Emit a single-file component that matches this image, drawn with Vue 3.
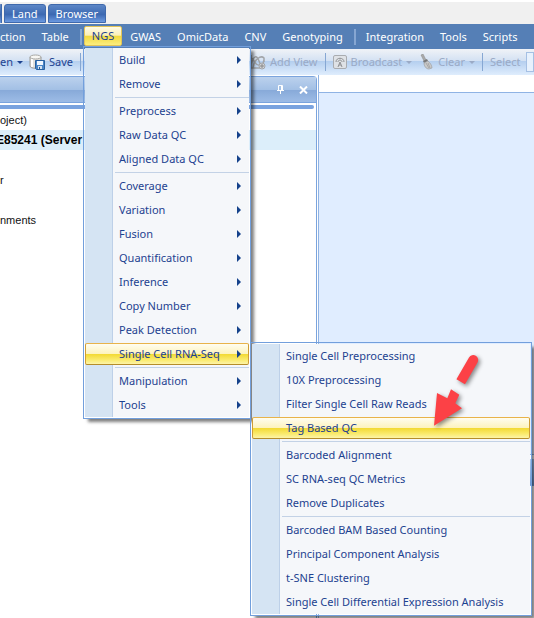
<script setup>
const menuBar = ['ction', 'Table', '|', 'NGS', 'GWAS', 'OmicData', 'CNV', 'Genotyping', '|', 'Integration', 'Tools', 'Scripts']

const ngsMenu = [
  ['Build', 'Remove'],
  ['Preprocess', 'Raw Data QC', 'Aligned Data QC'],
  ['Coverage', 'Variation', 'Fusion', 'Quantification', 'Inference', 'Copy Number', 'Peak Detection', 'Single Cell RNA-Seq'],
  ['Manipulation', 'Tools'],
]

const cellMenu = [
  ['Single Cell Preprocessing', '10X Preprocessing', 'Filter Single Cell Raw Reads', 'Tag Based QC'],
  ['Barcoded Alignment', 'SC RNA-seq QC Metrics', 'Remove Duplicates'],
  ['Barcoded BAM Based Counting', 'Principal Component Analysis', 't-SNE Clustering', 'Single Cell Differential Expression Analysis'],
]

const tree = ['oject)', 'E85241 (Server', '', 'r', '', 'nments']
</script>

<template>
  <div class="window">
    <nav class="tabs">
      <button class="tab first" aria-label="Previous tab"></button>
      <button class="tab">Land</button>
      <button class="tab">Browser</button>
    </nav>

    <nav class="menubar">
      <template v-for="(m, i) in menuBar" :key="i">
        <span v-if="m === '|'" class="bar-sep"></span>
        <button v-else class="bar-item" :class="{ open: m === 'NGS', cut: i === 0 }">{{ m }}</button>
      </template>
    </nav>

    <div class="toolbar">
      <div class="tools left-tools">
        <button class="tool">en<i class="down"></i></button>
        <button class="tool save">
          <svg width="16" height="16" viewBox="0 0 16 16">
            <path d="M1 3v9c0 3 11 3 11 0V3z" fill="#e3e1dc" stroke="#9b9a97" />
            <path d="M3 4v9" stroke="#fff" stroke-width="2" />
            <ellipse cx="6.500" cy="3" rx="5.500" ry="2" fill="#f8f7f3" stroke="#a9a8a4" />
            <path d="M6.500 6.500h9v9h-8l-1-1z" fill="#4a86c8" stroke="#28609f" />
            <path d="M8 7h6v4H8z" fill="#eef6ff" />
            <path d="M9 12h4v3H9z" fill="#d4e2ef" />
            <path d="M10 13h1v2h-1z" fill="#28609f" />
          </svg>
          Save
        </button>
        <span class="tool-sep"></span>
      </div>
      <div class="tools right-tools">
        <button class="tool" disabled>
          <svg width="16" height="16" viewBox="0 0 16 16" fill="none" stroke="#a2a5a9" stroke-width="1.500">
            <path d="M1 1v13h9M1 10c3-9 6-9 8-3s4 4 5-1M1 4c3 0 4 8 8 7M3 14c1-9 8-13 11-10v4" />
            <circle cx="12" cy="12" r="3" fill="#d3d5d8" stroke-width="1" />
            <path d="M12 10v4M10 12h4" stroke="#888" stroke-width="1" />
          </svg>
          Add View
        </button>
        <span class="tool-sep"></span>
        <button class="tool" disabled>
          <svg width="14" height="14" viewBox="0 0 14 14" fill="none" stroke="#8d8f92">
            <rect x=".5" y=".5" width="13" height="13" rx="1.500" fill="#dfe2e6" stroke="#a9acb0" />
            <path d="M3 7c0-5 8-5 8 0M5 7c0-2.500 4-2.500 4 0M7 7l-2 5M7 7l2 5M6 10h2" />
          </svg>
          Broadcast<i class="down"></i>
        </button>
        <button class="tool" disabled>
          <svg width="14" height="16" viewBox="0 0 14 16">
            <path d="M1 1l2-1 3 6-2 1z" fill="#aaa" stroke="#858585" stroke-width=".5" />
            <path d="M3 7l4-2 1 2-4 2z" fill="#777" />
            <path d="M4 9l4-2c2 2 4 4 4 7l-3 1c-3 0-5-3-5-6z" fill="#c9c9c9" stroke="#999" stroke-width=".6" />
            <path d="M6 9l3 5M8 9l2 5" stroke="#909090" stroke-width=".6" />
          </svg>
          Clear<i class="down"></i>
        </button>
        <span class="tool-sep"></span>
        <label class="tool disabled" for="selection">Select</label>
        <input id="selection" class="box" disabled />
      </div>
    </div>

    <main class="work">
      <section class="explorer">
        <header class="pane-head">
          <button class="pane-btn" aria-label="Pin">
            <svg width="9" height="9" viewBox="0 0 9 9" fill="none" stroke="#fff">
              <path d="M2.500 5V.5h4V5M5.500 1v4M1 5.500h7M4.500 6v3" />
            </svg>
          </button>
          <button class="pane-btn" aria-label="Close">
            <svg width="9" height="8" viewBox="0 0 9 8" fill="none" stroke="#fff" stroke-width="2">
              <path d="M1 .5l7 7M8 .5l-7 7" />
            </svg>
          </button>
        </header>
        <div class="band"></div>
        <ul class="tree">
          <li v-for="(t, i) in tree" :key="i" :class="{ chosen: i === 1 }">{{ t }}</li>
        </ul>
      </section>
      <section class="canvas">
        <div class="view"></div>
        <div class="dock"></div>
        <div class="dock-body"></div>
      </section>
    </main>

    <div class="menu ngs">
      <div v-for="(group, g) in ngsMenu" :key="g" class="group">
        <button v-for="item in group" :key="item" class="item" :class="{ hot: item === 'Single Cell RNA-Seq' }">
          <span>{{ item }}</span><i class="more"></i>
        </button>
      </div>
    </div>

    <div class="menu cells">
      <div v-for="(group, g) in cellMenu" :key="g" class="group">
        <button v-for="item in group" :key="item" class="item" :class="{ hot: item === 'Tag Based QC' }">
          <span>{{ item }}</span>
        </button>
      </div>
    </div>

    <svg class="pointer" width="60" height="84" viewBox="0 0 60 84">
      <g fill="#fc4146">
        <path d="M26.400 29.200L39 7.500a4.700 4.700 0 0 1 8.500 5L35 34.200z" />
        <path d="M4 75.700L7 43l10.300 5.300L21 39.300l8.300 5.400-4 8.600 6.700 5z" />
      </g>
    </svg>
  </div>
</template>

<style>
html, body, #app { height: 100%; }
body { margin: 0; overflow: hidden; }
</style>

<style scoped>
.window {
  position: relative;
  display: flex;
  flex-direction: column;
  height: 100%;
  overflow: hidden;
  background: #fff;
  font: 11px/16px "Noto Sans", "Open Sans", sans-serif;
  color: #1d4290;
}
button {
  margin: 0;
  padding: 0;
  border: 0;
  background: none;
  font: inherit;
  color: inherit;
  white-space: nowrap;
}
.tabs {
  display: flex;
  gap: 2px;
  height: 20px;
  margin-top: 2px;
  padding-top: 2px;
  background: #f0f0f0;
}
.tab {
  height: 19px;
  padding: 0 7px;
  border: 1px solid #3f69ac;
  border-radius: 3px 3px 0 0;
  background: linear-gradient(#5c86c6, #3f6cb4 50%, #3865af 52%, #6c9ae0);
  color: #fff;
  line-height: 17px;
}
.tab.first { width: 2px; padding: 0; border-width: 1px 1px 0 0; }
.menubar {
  display: flex;
  align-items: center;
  height: 25px;
  background: #557fb6;
  color: #fff;
}
.bar-item { height: 21px; padding: 0 8px; line-height: 18px; }
.bar-item.cut { padding-left: 0; }
.bar-item.open {
  align-self: flex-start;
  margin-top: 2px;
  height: 20px;
  padding: 0 7px;
  border: 1px solid #e2c458;
  border-radius: 2px;
  background: linear-gradient(#fffbe6, #fbefb8 46%, #f2d93c 50%, #fcee80);
  color: #1d4290;
}
.bar-sep { width: 2px; height: 16px; margin: 0 2px 0 3px; background: #86a6d2; }
.toolbar {
  display: flex;
  align-items: center;
  height: 26px;
  background: linear-gradient(#f0f3f7, #d3e1f3 46%, #b5cfef 48%, #dfedfd);
}
.tools { display: flex; align-items: center; }
.left-tools { width: 76px; }
.right-tools { flex: 1; margin-left: 174px; }
.tool { display: flex; align-items: center; gap: 4px; padding: 0; }
.tool.save { margin-left: 6px; }
.tool:disabled, .tool.disabled { color: #9aaac6; }
.tool-sep { flex: none; width: 1px; height: 18px; margin: 0 7px; background: #86a7d3; }
.down { border: 3px solid transparent; border-top-color: currentColor; border-bottom: 0; }
.right-tools .tool + .tool { margin-left: 8px; }
.box {
  flex: 1;
  min-width: 8px;
  width: 8px;
  box-sizing: border-box;
  height: 20px;
  margin-left: 5px;
  border: 1px solid #a5c0e4;
  background: #e7f1fd;
}
.work { flex: 1; display: flex; min-height: 0; }
.explorer {
  flex: 0 0 317px;
  box-sizing: border-box;
  margin-top: 1px;
  border-right: 1px solid #7ba4dd;
  border-top-right-radius: 4px;
  overflow: hidden;
}
.pane-head {
  box-sizing: border-box;
  display: flex;
  justify-content: flex-end;
  align-items: center;
  gap: 14px;
  height: 27px;
  padding-right: 8px;
  border: solid #7ba4dd;
  border-width: 1px 0;
  background: linear-gradient(#bbd1ed, #a3c0e5 50%, #88aad9 54%, #9dbce6);
}
.pane-btn { display: flex; }
.band { height: 4px; margin: 2px 2px 1px 0; border-radius: 0 2px 2px 0; background: #7aa3df; }
.tree {
  margin: 0;
  padding: 0;
  list-style: none;
  font: 11px/20px "Liberation Sans", Arial, sans-serif;
  color: #111;
}
.tree li { height: 20px; white-space: nowrap; }
.tree .chosen { background: #dceefa; font-size: 12px; font-weight: bold; color: #000; text-indent: -4px; }
.canvas {
  flex: 1;
  display: flex;
  flex-direction: column;
  margin-left: 1px;
  border-left: 1px solid #8fb3e4;
}
.view { flex: 362; margin-top: 17px; border: solid #8fb3e4; border-width: 1px 0; background: #e0edff; }
.dock { height: 26px; margin-top: 4px; background: linear-gradient(#a9c6ec, #6f98d0); }
.dock-body { flex: 132; border-top: 1px solid #7ba4dd; background: #fff; }

.menu {
  position: absolute;
  box-sizing: border-box;
  padding: 1px;
  border: 1px solid #729fdc;
  background: linear-gradient(90deg, #d5e4f3 28px, #bdd0e8 28px 29px, #f5f7fa 29px);
  background-clip: content-box;
  background-color: #f5f7fa;
  box-shadow: 4px 4px 3px -1px rgba(0, 0, 0, .5);
}
.ngs { left: 83px; top: 46px; width: 168px; }
.cells { left: 250px; top: 342px; width: 282px; }
.group { display: flow-root; }
.group + .group { padding-top: 3px; background: linear-gradient(#c3d2e6, #c3d2e6) 30px 1px / 100% 1px no-repeat; }
.item {
  box-sizing: border-box;
  display: flex;
  align-items: center;
  justify-content: space-between;
  width: 100%;
  height: 22px;
  margin: 1px 0;
  padding: 0 7px 0 33px;
  border: 1px solid transparent;
  border-radius: 2px;
}
.item + .item { margin-top: 2px; }
.item.hot {
  border-color: #e8b34a #cf9d35 #b58d2a;
  background: linear-gradient(#fffdf0, #fdf3bf 48%, #f3da36 52%, #faeb70 80%, #fdf4a8);
}
.more { border: 4px solid transparent; border-left-color: #15428b; border-right: 0; }
.pointer {
  position: absolute;
  left: 430px;
  top: 350px;
  overflow: visible;
  filter: drop-shadow(2px 2px 2px rgba(0, 0, 0, .45));
}
</style>
